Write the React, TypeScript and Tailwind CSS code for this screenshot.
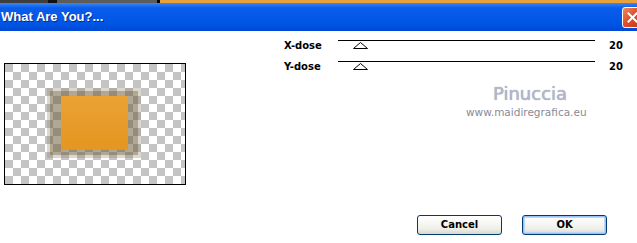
import React from 'react';

const Slider: React.FC<{ label: string; value: number }> = ({ label, value }) => (
  <div className="flex items-start h-[21px]">
    <div className="w-[54px] text-[10px] leading-[12px] font-bold text-black">{label}</div>
    <div className="w-[257px] border-t border-black">
      <svg width="15" height="7" viewBox="0 0 15 7" className="ml-[15px] mt-[1px] block">
        <polygon points="7.5,0.5 14.5,6.5 0.5,6.5" fill="#fff" stroke="#000" strokeWidth="1" />
      </svg>
    </div>
    <div className="ml-[14px] text-[10px] leading-[12px] font-bold text-black">{value}</div>
  </div>
);

const XpButton: React.FC<{ label: string; focused?: boolean }> = ({ label, focused }) => (
  <button
    className={
      focused
        ? 'w-[85px] h-[20px] rounded-[3px] border border-[#003c74] bg-[linear-gradient(#ffffff,#f0f0ea_70%,#d8d8ce)] shadow-[inset_0_0_0_1px_#9ec0f5,inset_0_0_0_2px_#bcd4f6] text-[10px] font-bold text-black leading-none'
        : 'w-[85px] h-[20px] rounded-[3px] border border-[#003c74] bg-[linear-gradient(#ffffff,#f0f0ea_70%,#d8d8ce)] text-[10px] font-bold text-black leading-none'
    }
  >
    {label}
  </button>
);

export default function App() {
  return (
    <div className="w-[637px] h-[243px] overflow-hidden bg-white font-['DejaVu_Sans',sans-serif]">
      {/* strip of the window behind */}
      <div className="flex h-[3px]">
        <div className="w-[48px] bg-[#3e3e3e]" />
        <div className="w-[9px] bg-[#111]" />
        <div className="w-[100px] bg-[#5c5c5c]" />
        <div className="w-[3px] bg-black" />
        <div className="flex-1 bg-[#e8a23c]" />
      </div>

      {/* title bar */}
      <div className="flex items-center h-[28px] bg-[linear-gradient(#3a86f2,#0a5cec_18%,#0055e5_75%,#0048d6)] overflow-hidden">
        <span className="pl-[1px] font-['Liberation_Sans',sans-serif] text-[13px] font-bold text-white [text-shadow:1px_1px_0_#0a2a8a]">
          What Are You?...
        </span>
        <div className="ml-auto -mr-[6px] mt-[1px] w-[21px] h-[21px] rounded-[3px] border border-white bg-[linear-gradient(135deg,#f08a5e,#e0502a_45%,#c03810)] flex items-center justify-center">
          <svg width="11" height="11" viewBox="0 0 11 11">
            <path d="M1.5 1.5 L9.5 9.5 M9.5 1.5 L1.5 9.5" stroke="#fff" strokeWidth="2" strokeLinecap="square" />
          </svg>
        </div>
      </div>

      {/* body */}
      <div className="flex flex-col h-[212px]">
        <div className="flex">
          <div className="pl-[4px] pt-[32px]">
            <div className="relative w-[182px] h-[122px] border border-black bg-[conic-gradient(#c4c4c4_25%,#ffffff_0_50%,#c4c4c4_0_75%,#ffffff_0)] bg-[length:16px_16px] bg-[position:-8px_0px]">
              <div className="absolute left-[42px] top-[24px] w-[94px] h-[70px] bg-[rgba(140,125,95,0.3)]" />
              <div className="absolute left-[45px] top-[27px] w-[88px] h-[64px] bg-[rgba(95,78,40,0.35)] blur-[0.6px]" />
              <div className="absolute left-[56px] top-[32px] w-[67px] h-[54px] bg-[linear-gradient(#eba233,#e79b2a_50%,#e5961f)]" />
            </div>
          </div>

          <div className="flex flex-col pl-[98px] pt-[9px]">
            <Slider label="X-dose" value={20} />
            <Slider label="Y-dose" value={20} />
            <div className="mt-[2px] ml-[209px] text-[18px] leading-[20px] text-[#b4b7cb] [text-shadow:0_0_1px_#8a8ea8]">
              Pinuccia
            </div>
            <div className="mt-[2px] ml-[182px] text-[10.5px] leading-[12px] text-[#8a8a98]">
              www.maidiregrafica.eu
            </div>
          </div>
        </div>

        <div className="mt-auto mb-[8px] flex justify-end gap-[20px] pr-[30px]">
          <XpButton label="Cancel" />
          <XpButton label="OK" focused />
        </div>
      </div>
    </div>
  );
}
